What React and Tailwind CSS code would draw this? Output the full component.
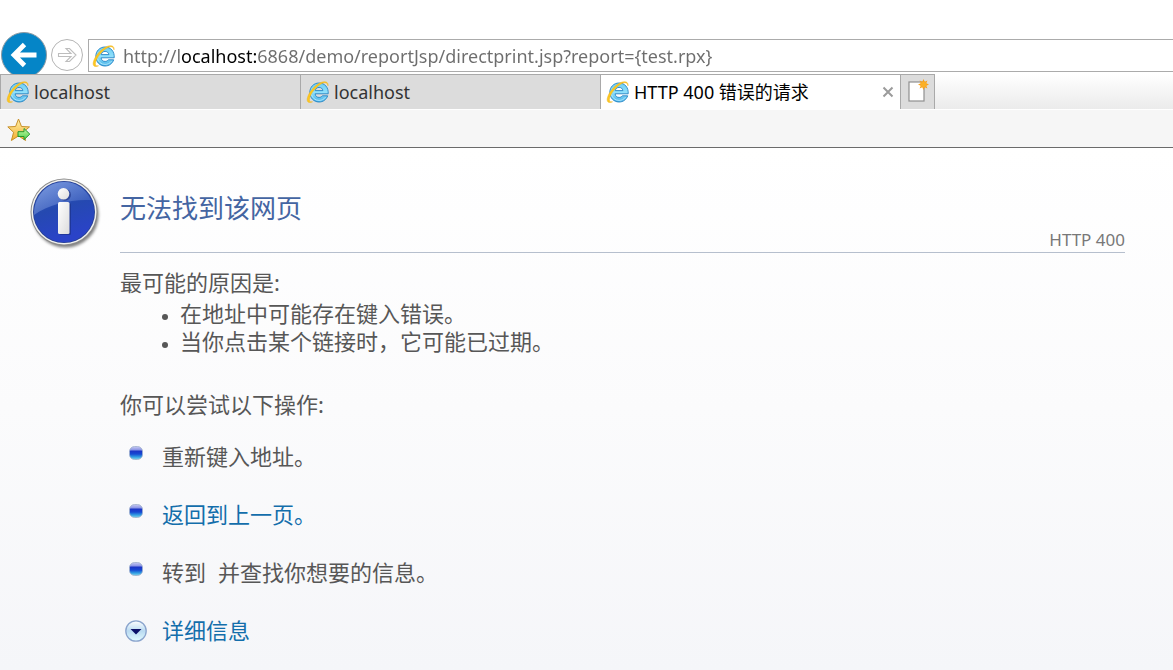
import React from "react";

const IeLogo = () => (
  <svg viewBox="0 0 24 24" className="size-6 shrink-0" aria-hidden="true">
    <defs>
      <linearGradient id="ieBlue" x1="0" y1="0" x2="0" y2="1">
        <stop offset="0" stopColor="#6fcdf2" />
        <stop offset="0.5" stopColor="#8fe0fb" />
        <stop offset="1" stopColor="#45b0e6" />
      </linearGradient>
    </defs>
    <path
      d="M13 3C7.700 3 3.800 7.100 3.800 12.400s3.900 9.600 9.200 9.600c4.200 0 7.300-2.300 8.700-6.200h-5.400c-.8 1.100-1.800 1.600-3.200 1.600-2.300 0-3.800-1.400-4-3.600h13.100C22.700 7.500 18.800 3 13 3zM9.200 10.600c.5-2 1.900-3.200 3.900-3.200s3.400 1.200 3.800 3.200z"
      fill="url(#ieBlue)"
      stroke="#2483c4"
      strokeWidth="0.9"
      strokeLinejoin="round"
    />
    <path
      d="M5.500 14.500c.8 3.500 3.700 5.900 7.500 5.900 2.800 0 5-1.100 6.500-3.200"
      fill="none"
      stroke="#c2f0ff"
      strokeWidth="0.8"
    />
    <path
      d="M22 5.800C22.600 1.600 18.600.7 14.200 2.800 8.400 5.600 3 12.200 1.500 17.500c-1.200 4.200.9 6.200 5 4.300-2.700.5-3.700-.9-2.900-3.900C5 13.200 9.600 7.200 14.600 4.200c3.900-2.300 6.900-2 7.400 1.600z"
      fill="#fcc81f"
      stroke="#eeb01a"
      strokeWidth="0.5"
    />
  </svg>
);

const InfoIcon = () => (
  <svg viewBox="0 0 72 72" className="size-[72px]" aria-hidden="true">
    <defs>
      <linearGradient id="infoBlue" x1="0" y1="0" x2="0.3" y2="1">
        <stop offset="0" stopColor="#3f68c8" />
        <stop offset="0.5" stopColor="#2549b0" />
        <stop offset="1" stopColor="#2a43c8" />
      </linearGradient>
      <linearGradient id="infoShine" x1="0" y1="0" x2="1" y2="1">
        <stop offset="0" stopColor="#9db6ea" stopOpacity="0.7" />
        <stop offset="1" stopColor="#6f90dc" stopOpacity="0.15" />
      </linearGradient>
      <linearGradient id="infoLetter" x1="0" y1="0" x2="1" y2="1">
        <stop offset="0" stopColor="#ffffff" />
        <stop offset="1" stopColor="#dcdcdc" />
      </linearGradient>
      <filter id="infoShadow" x="-20%" y="-20%" width="140%" height="140%">
        <feGaussianBlur stdDeviation="1.6" />
      </filter>
    </defs>
    <circle cx="35.500" cy="36.500" r="33" fill="#000" opacity="0.5" filter="url(#infoShadow)" />
    <circle cx="34" cy="34" r="33.500" fill="#8b8b8b" />
    <circle cx="34" cy="34" r="32.500" fill="#f1f1ee" />
    <circle cx="34" cy="34" r="31" fill="#263f93" />
    <circle cx="34" cy="34" r="30.200" fill="url(#infoBlue)" />
    <path d="M4 37C4 18 17 4 34 4c12 0 22 7 27 18-20-1-42 4-57 15z" fill="url(#infoShine)" />
    <circle cx="35" cy="16.800" r="6" fill="#1b2f80" opacity="0.6" />
    <rect x="29.500" y="25" width="11.500" height="32" rx="1.500" fill="#1b2f80" opacity="0.6" />
    <circle cx="33.500" cy="15.800" r="5.800" fill="url(#infoLetter)" />
    <rect x="28" y="24" width="11.500" height="32" rx="1.500" fill="url(#infoLetter)" />
  </svg>
);

const StarIcon = () => (
  <svg viewBox="0 0 24 24" className="size-6" aria-hidden="true">
    <defs>
      <linearGradient id="starGold" x1="0" y1="0" x2="0" y2="1">
        <stop offset="0" stopColor="#fff0a8" />
        <stop offset="1" stopColor="#f3ae2c" />
      </linearGradient>
      <linearGradient id="arrowGreen" x1="0" y1="0" x2="0" y2="1">
        <stop offset="0" stopColor="#c5f7a5" />
        <stop offset="1" stopColor="#4fd14a" />
      </linearGradient>
    </defs>
    <path
      d="M11.500 1l3 7.500 8 .4-6.200 5.200 2.300 8.400-7.100-4.600-7.100 4.600 2.200-8.200L.8 8.900l7.800-.4z"
      fill="url(#starGold)"
      stroke="#c8902a"
      strokeWidth="1"
      strokeLinejoin="round"
    />
    <path
      d="M11 13.700h6V10.500l5.800 5.600-5.800 5.600v-3.200h-6z"
      fill="url(#arrowGreen)"
      stroke="#25982c"
      strokeWidth="1"
      strokeLinejoin="round"
    />
  </svg>
);

const NewTabIcon = () => (
  <svg viewBox="0 0 22 24" className="h-6 w-[22px]" aria-hidden="true">
    <rect x="2" y="3" width="15" height="19" fill="#fff" stroke="#8f8f8f" strokeWidth="1.200" />
    <path
      d="M16.500 0l1.200 2.700L20.400 1.600l-1.100 2.700L22 5.500l-2.700 1.200 1.100 2.700-2.700-1.100L16.500 11l-1.200-2.700-2.700 1.100 1.100-2.700L11 5.500l2.700-1.200-1.100-2.700 2.700 1.100z"
      fill="#f9a21b"
    />
    <circle cx="16.500" cy="5.500" r="2.800" fill="#fbb026" />
  </svg>
);

const BulletIcon = () => (
  <svg viewBox="0 0 14 14" className="size-3.5" aria-hidden="true">
    <defs>
      <linearGradient id="bulletBlue" x1="0" y1="0" x2="0" y2="1">
        <stop offset="0" stopColor="#c9caf2" />
        <stop offset="0.25" stopColor="#8d97e6" />
        <stop offset="0.36" stopColor="#1b34c6" />
        <stop offset="0.58" stopColor="#1648d2" />
        <stop offset="0.8" stopColor="#2f9be2" />
        <stop offset="1" stopColor="#7fd4e8" />
      </linearGradient>
    </defs>
    <rect x="0.500" y="0.500" width="13" height="13" rx="5" fill="url(#bulletBlue)" stroke="#9fb0cc" strokeWidth="0.8" />
  </svg>
);

const ExpandIcon = () => (
  <svg viewBox="0 0 22 22" className="size-[22px]" aria-hidden="true">
    <defs>
      <linearGradient id="expandBg" x1="0" y1="0" x2="0" y2="1">
        <stop offset="0" stopColor="#ffffff" />
        <stop offset="0.5" stopColor="#b9daf1" />
        <stop offset="1" stopColor="#e2fbff" />
      </linearGradient>
    </defs>
    <circle cx="11" cy="11" r="10.200" fill="url(#expandBg)" stroke="#8aa4cd" strokeWidth="1.300" />
    <path d="M5.500 9h11L11 14.500z" fill="#0b1068" />
  </svg>
);

const InactiveTab = ({ title }) => (
  <button
    type="button"
    role="tab"
    aria-selected="false"
    className="flex h-full w-[300px] items-center gap-1 border-t border-l border-[#a9a9a9] bg-[#dcdcdc] pl-[5px] text-[#333]"
  >
    <IeLogo />
    {title}
  </button>
);

const Browser = () => {
  return (
    <header className="text-lg">
      {/* Address bar */}
      <div className="flex items-start pt-8">
        <button
          type="button"
          aria-label="Back"
          className="ml-px -mb-1 size-[46px] shrink-0 rounded-full border border-[#8e9aa2] bg-[#0585c7]"
        >
          <svg viewBox="0 0 44 44" aria-hidden="true">
            <path d="M34.500 22H13M22.500 11.500L12 22l10.500 10.500" fill="none" stroke="#fff" strokeWidth="4.800" />
          </svg>
        </button>
        <button
          type="button"
          aria-label="Forward"
          className="mt-[7px] ml-1 size-8 shrink-0 rounded-full border border-[#b5b5b5] bg-white"
        >
          <svg viewBox="0 0 30 30" aria-hidden="true">
            <path
              d="M6.500 13.500H19L14 8.500h3.500L24 15l-6.500 6.500H14l5-5H6.500z"
              fill="#fff"
              stroke="#bdbdbd"
              strokeWidth="1.100"
            />
          </svg>
        </button>
        <div className="mt-[7px] mb-0.5 ml-[5px] flex h-[33px] flex-1 items-center border border-r-0 border-[#ababab] bg-white pl-[3px]">
          <IeLogo />
          <input
            type="text"
            aria-label="Address"
            defaultValue="http://localhost:6868/demo/reportJsp/directprint.jsp?report={test.rpx}"
            className="ml-[7px] h-full flex-1 bg-[linear-gradient(to_right,#6d6d6d_57px,#000_57px,#000_134px,#6d6d6d_134px)] bg-clip-text text-transparent outline-none"
          />
        </div>
      </div>

      {/* Tabs */}
      <div className="relative flex h-[35px] bg-linear-to-b from-white to-[#ebebeb]" role="tablist">
        <InactiveTab title="localhost" />
        <InactiveTab title="localhost" />
        <div className="flex w-[300px] items-center border-t border-l border-[#a9a9a9] bg-white pr-1.5 pl-[5px]">
          <button type="button" role="tab" aria-selected="true" className="flex flex-1 items-center gap-1 text-black">
            <IeLogo />
            HTTP 400 错误的请求
          </button>
          <button type="button" aria-label="Close tab">
            <svg viewBox="0 0 12 12" className="size-3" aria-hidden="true">
              <path d="M1.500 1.500l9 9M10.500 1.500l-9 9" stroke="#9b9b9b" strokeWidth="2" />
            </svg>
          </button>
        </div>
        <button
          type="button"
          aria-label="New tab"
          className="flex w-[35px] justify-center border border-b-0 border-[#a9a9a9] bg-[#dcdcdc] pt-1"
        >
          <NewTabIcon />
        </button>
      </div>

      {/* Favorites bar */}
      <div className="flex h-[39px] items-center border-t border-b border-t-white border-b-[#6b6b6b] bg-[#f6f6f6] pt-0.5 pl-[7px]">
        <button type="button" aria-label="Add to favorites">
          <StarIcon />
        </button>
      </div>
    </header>
  );
};

const App = () => {
  return (
    <div className="flex min-h-screen flex-col bg-white font-['Noto_Sans','Noto_Sans_CJK_SC',sans-serif]">
      <Browser />

      <main className="flex flex-1 bg-linear-to-b from-white via-[#fbfbfc] to-[#f5f6f9] pr-12 pl-[30px] text-[22px] leading-[30px] text-[#575757]">
        <div className="w-[90px] shrink-0 pt-[30px]">
          <InfoIcon />
        </div>

        <div className="flex-1 pt-[42px]">
          <h1 className="text-[26px] leading-9 text-[#4465a2]">无法找到该网页</h1>
          <p className="mt-0.5 border-b border-[#b6bfcd] text-right text-[17px] leading-6 text-[#787878]">HTTP 400</p>

          <p className="mt-3.5">最可能的原因是:</p>
          <ul className="mt-0.5 list-disc pl-[60px] leading-7 marker:text-base">
            <li>在地址中可能存在键入错误。</li>
            <li>当你点击某个链接时，它可能已过期。</li>
          </ul>

          <p className="mt-[34px]">你可以尝试以下操作:</p>
          <ul className="mt-[22px] flex flex-col gap-7">
            <li className="flex">
              <span className="w-[42px] pt-[5px] pl-[9px]">
                <BulletIcon />
              </span>
              重新键入地址。
            </li>
            <li className="flex">
              <span className="w-[42px] pt-[5px] pl-[9px]">
                <BulletIcon />
              </span>
              <a href="#back" className="text-[#136eab]">
                返回到上一页。
              </a>
            </li>
            <li className="flex">
              <span className="w-[42px] pt-[5px] pl-[9px]">
                <BulletIcon />
              </span>
              <span className="mr-3">转到</span>
              并查找你想要的信息。
            </li>
            <li>
              <button type="button" aria-expanded="false" className="flex text-[#136eab]">
                <span className="w-[42px] pt-[5px] pl-[5px]">
                  <ExpandIcon />
                </span>
                详细信息
              </button>
            </li>
          </ul>
        </div>
      </main>
    </div>
  );
};

export default App;
